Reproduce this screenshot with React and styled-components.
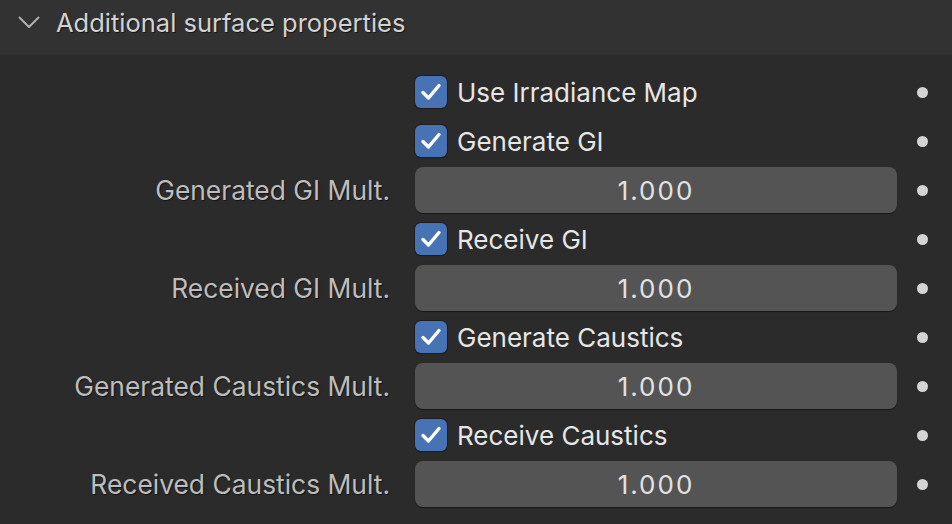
import styled, { createGlobalStyle } from "styled-components";

const GlobalStyle = createGlobalStyle`
  html, body {
    margin: 0;
    padding: 0;
    background: #2b2b2b;
  }
  body {
    font-family: Inter, "Noto Sans", sans-serif;
    width: 952px;
    height: 524px;
    overflow: hidden;
  }
`;

const Panel = styled.section`
  width: 952px;
  height: 524px;
  background: #2b2b2b;
  display: flex;
  flex-direction: column;
`;

const Header = styled.header`
  height: 55px;
  background: #323232;
  display: flex;
  align-items: center;
  gap: 16px;
  padding: 0 0 10px 18px;
  box-sizing: border-box;
`;

const Title = styled.span`
  font-size: 25.5px;
  color: #d2d2d2;
  text-shadow: 1px 1px 1px rgba(0, 0, 0, 0.6);
`;

const Grid = styled.div`
  display: grid;
  grid-template-columns: 395px 482px 1fr;
  column-gap: 20px;
  row-gap: 3px;
  grid-auto-rows: 46px;
  padding-top: 14px;
  align-items: center;
`;

const Label = styled.span`
  justify-self: end;
  padding-right: 5px;
  font-size: 26.4px;
  color: #bdbdbd;
  text-shadow: 1px 1px 1px rgba(0, 0, 0, 0.55);
  white-space: nowrap;
`;

const CheckRow = styled.label`
  display: flex;
  align-items: center;
  gap: 10px;
  font-size: 26px;
  color: #e6e6e6;
  white-space: nowrap;
`;

const Box = styled.span`
  width: 32px;
  height: 32px;
  border-radius: 6px;
  background: #4772b3;
  box-shadow: 0 0 0 1px #1e1e1e, 0 1px 1px rgba(0, 0, 0, 0.4);
  display: flex;
  align-items: center;
  justify-content: center;
`;

const Field = styled.div`
  height: 46px;
  border-radius: 8px;
  background: #545454;
  box-shadow: 0 1px 1px rgba(0, 0, 0, 0.45);
  display: flex;
  align-items: center;
  justify-content: center;
  font-size: 26px;
  color: #e2e2e2;
  letter-spacing: 2px;
`;

const Dot = styled.span`
  width: 11px;
  height: 11px;
  border-radius: 50%;
  background: #d4d4d4;
`;

const Chevron = () => (
  <svg width="22" height="13" viewBox="0 0 22 13">
    <polyline
      points="1.5,1.5 11,11 20.5,1.5"
      fill="none"
      stroke="#b0b0b0"
      strokeWidth="2"
      strokeLinecap="round"
      strokeLinejoin="round"
    />
  </svg>
);

const Check = () => (
  <svg width="32" height="32" viewBox="0 0 32 32">
    <polyline
      points="8,16.5 13.5,22 24,9.5"
      fill="none"
      stroke="#ffffff"
      strokeWidth="3.4"
      strokeLinecap="round"
      strokeLinejoin="round"
    />
  </svg>
);

const Row = styled.div`
  display: contents;
`;

const rows = [
  { type: "check", text: "Use Irradiance Map" },
  { type: "check", text: "Generate GI" },
  { type: "value", text: "Generated GI Mult.", value: "1.000" },
  { type: "check", text: "Receive GI" },
  { type: "value", text: "Received GI Mult.", value: "1.000" },
  { type: "check", text: "Generate Caustics" },
  { type: "value", text: "Generated Caustics Mult.", value: "1.000" },
  { type: "check", text: "Receive Caustics" },
  { type: "value", text: "Received Caustics Mult.", value: "1.000" },
];

export default function App() {
  return (
    <>
      <GlobalStyle />
      <Panel>
        <Header>
          <Chevron />
          <Title>Additional surface properties</Title>
        </Header>
        <Grid>
          {rows.map((row) =>
            row.type === "check" ? (
              <Row key={row.text}>
                <span />
                <CheckRow>
                  <Box>
                    <Check />
                  </Box>
                  {row.text}
                </CheckRow>
                <Dot />
              </Row>
            ) : (
              <Row key={row.text}>
                <Label>{row.text}</Label>
                <Field>{row.value}</Field>
                <Dot />
              </Row>
            )
          )}
        </Grid>
      </Panel>
    </>
  );
}
